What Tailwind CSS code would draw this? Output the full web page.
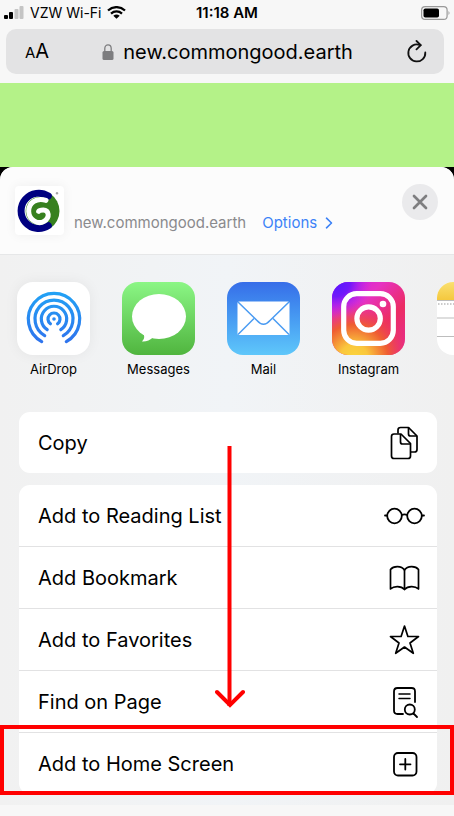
<!DOCTYPE html>
<html lang="en">
<head>
<meta charset="utf-8">
<meta name="viewport" content="width=device-width, initial-scale=1">
<title>Share</title>
<script src="https://cdn.jsdelivr.net/npm/@tailwindcss/browser@4"></script>
</head>
<body class="bg-[#f7f7f7] font-['Inter','Liberation_Sans',sans-serif] text-black overflow-x-hidden">
<div class="flex min-h-screen flex-col">

  <!-- Status bar and address bar -->
  <header class="px-1 pb-[9px]">
    <div class="grid h-[29px] grid-cols-3 items-center pb-1">
      <div class="flex items-center gap-[6px]">
        <svg class="h-[13px] w-5" viewBox="0 0 20 13" aria-label="Signal"><rect x="0" y="9" width="4" height="4" rx="1"/><rect x="5" y="6" width="4" height="7" rx="1"/><rect x="10.500" y="3" width="4" height="10" rx="1" fill="#c4c4c4"/><rect x="15.500" y="0" width="4" height="13" rx="1" fill="#c4c4c4"/></svg>
        <span class="whitespace-nowrap text-[14px] leading-5">VZW Wi-Fi</span>
        <svg class="h-[13px] w-[19px] shrink-0" viewBox="0 0 19 13" fill="none" stroke="#000" stroke-width="2.300" aria-label="Wi-Fi"><path d="M1 4.500C6 0 13 0 18 4.500M4 7.600C7.200 4.700 11.800 4.700 15 7.600"/><path d="M9.500 12.800L6.300 9.700Q9.500 7.200 12.700 9.700Z" fill="#000" stroke="none"/></svg>
      </div>
      <span class="text-center text-[15px] leading-5 font-semibold">11:18 AM</span>
      <svg class="h-[14px] w-[29px] justify-self-end" viewBox="0 0 29 14" aria-label="Battery"><rect x=".6" y=".6" width="25.500" height="12.800" rx="3.500" fill="none" stroke="#999" stroke-width="1.200"/><rect x="2.500" y="2.500" width="15.500" height="9" rx="1.800"/><path d="M27.500 5Q29.500 7 27.500 9Z" fill="#999"/></svg>
    </div>
    <div class="mr-[6px] ml-[2px] flex h-[45px] items-center justify-between rounded-[10px] bg-[#e3e3e4] pr-4 pl-[19px]">
      <button class="flex items-baseline" aria-label="Page settings"><span class="text-[15px]">A</span><span class="text-[20px] leading-6">A</span></button>
      <a href="#" class="flex items-center gap-[9px] text-[20px] leading-6">
        <svg class="h-4 w-3" viewBox="0 0 12 16" aria-hidden="true"><rect x=".5" y="7" width="11" height="9" rx="1.500" fill="#7d7d7f"/><path d="M2.800 8V4.500a3.200 3.600 0 0 1 6.400 0V8" fill="none" stroke="#7d7d7f" stroke-width="1.300"/></svg>
        <span>new.commongood.earth</span>
      </a>
      <button aria-label="Reload"><svg class="h-6 w-[22px]" viewBox="0 0 22 24" fill="none" stroke="#111" stroke-width="1.800" stroke-linecap="round" stroke-linejoin="round"><path d="M19.300 12.500A8.500 8.500 0 1 1 13.500 4.900L14.500 5.200"/><path d="M10.500 1L14.800 5.200L10.500 9.400"/></svg></button>
    </div>
  </header>

  <div class="h-[84px] bg-[#b4f288]"></div>

  <!-- Share sheet -->
  <div class="flex flex-1 flex-col bg-black">
  <main class="flex flex-1 flex-col rounded-t-[13px] bg-gradient-to-r from-[#f1f1f1] via-[#f1f4f7] to-[#f0f0f0]">
    <section class="flex h-[88px] items-start rounded-t-[13px] border-b border-[#e6e7e8] bg-[#fcfcfc] pr-4 pl-[15px]">
      <div class="mt-[19px] flex flex-1 items-end gap-[10px]">
        <svg class="size-[49px] rounded-[4px] bg-white shadow-[0_0_12px_rgba(0,0,0,0.06)]" viewBox="47 93 147 147" aria-label="Common Good logo">
          <path d="M153 116A63 63 0 0 1 153 220Q145 196 140 168Q146 140 153 116Z" fill="#37801f"/>
          <circle cx="122" cy="168" r="43" fill="#37801f"/>
          <path d="M147 123A53 53 0 1 0 147 212" fill="none" stroke="#000080" stroke-width="21" stroke-linecap="round"/>
          <path d="M140 136C112 127 88 143 88 169C89 197 118 209 134 199C153 187 149 165 132 165C124 165 119 167 118 169" fill="none" stroke="#fff" stroke-width="15" stroke-linecap="round"/>
          <circle cx="173" cy="115" r="3" fill="#aaa" stroke="#777"/>
        </svg>
        <p class="flex items-center gap-4 pb-[2px] text-[15px] leading-5 whitespace-nowrap text-[#8a8a8d]">new.commongood.earth
          <a href="#" class="flex items-center gap-2 text-[#3c82f7]">Options
            <svg class="h-3 w-2" viewBox="0 0 8 12" fill="none" stroke="currentColor" stroke-width="1.600" stroke-linecap="round" stroke-linejoin="round" aria-hidden="true"><path d="M1.500 1.200L6.500 6L1.500 10.800"/></svg></a></p>
      </div>
      <button class="mt-[17px] flex size-[36px] items-center justify-center rounded-full bg-[#eaeaec]" aria-label="Close"><svg class="size-4" viewBox="0 0 16 16" stroke="#7e7e80" stroke-width="2.700" stroke-linecap="round"><path d="M2 2L14 14M14 2L2 14"/></svg></button>
    </section>

    <nav class="flex gap-8 overflow-hidden pt-[27px] pb-[33px] pl-[17px] text-[13px] leading-5" aria-label="Share with">
      <a href="#" class="flex w-[73px] shrink-0 flex-col items-center gap-1">
        <svg class="size-[73px] rounded-[16px] bg-white shadow-[0_0_14px_rgba(0,0,0,0.06)]" viewBox="0 0 73 73" aria-hidden="true">
          <defs><linearGradient id="ad" gradientUnits="userSpaceOnUse" x1="0" y1="10" x2="0" y2="62"><stop stop-color="#22a2f5"/><stop offset="1" stop-color="#2f72ed"/></linearGradient></defs>
          <g fill="none" stroke="url(#ad)" stroke-width="3.200" stroke-linecap="round"><path d="M24.700 59.600A25.700 25.700 0 1 1 49.300 59.600"/><path d="M27.700 53.600A19 19 0 1 1 46.300 53.600"/><path d="M30.200 47.700A12.700 12.700 0 1 1 43.800 47.700"/><path d="M33.400 41.800A6 6 0 1 1 40.600 41.800"/></g><circle cx="37" cy="37" r="1.800" fill="#2a89f1"/>
        </svg><span>AirDrop</span></a>
      <a href="#" class="flex w-[73px] shrink-0 flex-col items-center gap-1">
        <svg class="size-[73px] rounded-[16px] bg-gradient-to-b from-[#8bf685] to-[#50b53e]" viewBox="0 0 73 73" aria-hidden="true">
          <ellipse cx="37" cy="34.500" rx="27" ry="22.500" fill="#fff"/><path d="M20 50Q24.500 55.500 20 59.500Q26 60 31.500 55Z" fill="#fff"/>
        </svg><span>Messages</span></a>
      <a href="#" class="flex w-[73px] shrink-0 flex-col items-center gap-1">
        <svg class="size-[73px] rounded-[16px] bg-gradient-to-b from-[#376de8] to-[#5fc7fa]" viewBox="0 0 73 73" aria-hidden="true">
          <rect x="10.500" y="19.500" width="52" height="33.500" rx="1.500" fill="#fff"/><g fill="none" stroke="#4a9bf2" stroke-width="1.500"><path d="M11 20L30 38.500Q36.500 46 43 38.500L62 20"/><path d="M11 52.500L27 36.500M62 52.500L46 36.500"/></g>
        </svg><span>Mail</span></a>
      <a href="#" class="flex w-[73px] shrink-0 flex-col items-center gap-1">
        <svg class="size-[73px] rounded-[16px]" viewBox="0 0 73 73" aria-hidden="true">
          <defs><linearGradient id="ia" x1="0" y1="0" x2="1" y2="1"><stop stop-color="#c51bf0"/><stop offset=".35" stop-color="#e632c2"/><stop offset=".65" stop-color="#ec2c63"/><stop offset="1" stop-color="#e52c94"/></linearGradient><radialGradient id="ib" cx=".3" cy="1.050" r=".78"><stop stop-color="#fbd63c"/><stop offset=".25" stop-color="#fac63c"/><stop offset=".6" stop-color="#ef5d32"/><stop offset="1" stop-color="#ef3060" stop-opacity="0"/></radialGradient><radialGradient id="ic" cx="0.050" cy="0" r=".5"><stop stop-color="#5218ff"/><stop offset=".4" stop-color="#7218fa"/><stop offset="1" stop-color="#c928f0" stop-opacity="0"/></radialGradient></defs>
          <rect width="73" height="73" fill="url(#ia)"/><rect width="73" height="73" fill="url(#ib)"/><rect width="73" height="73" fill="url(#ic)"/>
          <g fill="none" stroke="#fff" stroke-width="5.200"><rect x="11.700" y="11.700" width="49.600" height="49.600" rx="13"/><circle cx="36.600" cy="36.500" r="11.700"/></g><circle cx="51" cy="22" r="3.300" fill="#fff"/>
        </svg><span>Instagram</span></a>
      <a href="#" class="flex w-[73px] shrink-0 flex-col items-center gap-1" aria-label="Notes">
        <svg class="size-[73px] rounded-[16px] bg-white" viewBox="0 0 73 73" aria-hidden="true">
          <defs><linearGradient id="no" x1="0" y1="0" x2="0" y2="1"><stop stop-color="#fae070"/><stop offset="1" stop-color="#f4c83e"/></linearGradient></defs>
          <rect width="73" height="18" fill="url(#no)"/><path d="M0 18.500H73M0 36H73M0 54.500H73" stroke="#bdbdbd"/><path d="M1 22H73" stroke="#bbb" stroke-width="1.500" stroke-dasharray="1.500 1.500"/>
        </svg></a>
    </nav>

    <!-- Actions -->
    <div class="relative mr-[17px] ml-[19px] flex flex-col gap-3 text-[20px] leading-6">
      <button class="flex h-[61px] items-center justify-between rounded-[11px] bg-white pr-3 pl-[19px]">Copy
        <svg class="h-[34px] w-[41px]" viewBox="0 0 41 34" fill="none" stroke="#000" stroke-width="1.700" stroke-linejoin="round"><path d="M14 7.500V4Q14 1.500 16.500 1.500H24.500L33 10V23.500Q33 26 30.500 26H27"/><path d="M24.500 1.500V8Q24.500 10 26.500 10H33"/><path d="M7.500 10.500Q7.500 8 10 8H17L26.500 17.500V30Q26.500 32.500 24 32.500H10Q7.500 32.500 7.500 30Z"/><path d="M16.500 8V16Q16.500 18 18.500 18H26.500"/></svg></button>

      <ul class="divide-y divide-[#e2e2e3] rounded-[11px] bg-white">
        <li><button class="flex h-[61px] w-full items-center justify-between pr-3 pl-[19px]">Add to Reading List
          <svg class="h-[34px] w-[41px]" viewBox="0 0 41 34" fill="none" stroke="#000" stroke-width="1.800" stroke-linecap="round"><circle cx="10.500" cy="17" r="7.300"/><circle cx="30.500" cy="17" r="7.300"/><path d="M1 16.500H3M38 16.500H40M17.800 16Q20.500 14.800 23.200 16"/></svg></button></li>
        <li><button class="flex h-[61px] w-full items-center justify-between pr-3 pl-[19px]">Add Bookmark
          <svg class="h-[34px] w-[41px]" viewBox="0 0 41 34" fill="none" stroke="#000" stroke-width="1.700" stroke-linejoin="round"><path d="M20.500 9C17.500 4.500 9.500 4.500 6.500 8.500V28C10 24.700 17 24.700 20.500 28.500C24 24.700 31 24.700 34.500 28V8.500C31.500 4.500 23.500 4.500 20.500 9Z"/><path d="M20.500 9V28.500"/></svg></button></li>
        <li><button class="flex h-[61px] w-full items-center justify-between pr-3 pl-[19px]">Add to Favorites
          <svg class="h-[34px] w-[41px]" viewBox="0 0 41 34" fill="none" stroke="#000" stroke-width="1.700" stroke-linejoin="round"><path d="M20.500 3L23.900 13.500H34.500L26 20L29.300 30.300L20.500 24L11.700 30.300L15 20L6.500 13.500H17.100Z"/></svg></button></li>
        <li><button class="flex h-[61px] w-full items-center justify-between pr-3 pl-[19px]">Find on Page
          <svg class="h-[34px] w-[41px]" viewBox="0 0 41 34" fill="none" stroke="#000" stroke-width="1.800" stroke-linecap="round"><path d="M31 17V6.500Q31 3 27.500 3H13.500Q10 3 10 6.500V25.500Q10 29 13.500 29H19"/><path d="M15 9H26M15 13.500H26" stroke-width="1.500"/><circle cx="25.800" cy="24.500" r="5"/><path d="M29.500 28.500L33 32"/></svg></button></li>
        <li class="relative"><button class="flex h-[61px] w-full items-center justify-between pr-3 pl-[19px]">Add to Home Screen
          <svg class="h-[34px] w-[41px]" viewBox="0 0 41 34" fill="none" stroke="#000" stroke-width="1.800" stroke-linecap="round"><rect x="10" y="6" width="22.500" height="22.500" rx="4"/><path d="M21.300 12V22.500M16 17.300H26.500"/></svg></button>
          <!-- Highlight frame -->
          <div class="pointer-events-none absolute -top-[8px] -right-[17px] -bottom-[1px] -left-[19px] border-4 border-[#ff0000]"></div></li>
      </ul>

      <!-- Pointer arrow -->
      <svg class="pointer-events-none absolute top-[34px] left-[196px] h-[264px] w-[30px]" viewBox="0 0 30 264" fill="none" stroke="#ff0000" stroke-width="4" aria-hidden="true"><path d="M14.500 0V260"/><path d="M2 246L15 259L28 246" stroke-linecap="round"/></svg>
    </div>
    <div class="mt-[11px] flex-1 bg-[#f7f7f7]"></div>
  </main>
  </div>
</div>
</body>
</html>
